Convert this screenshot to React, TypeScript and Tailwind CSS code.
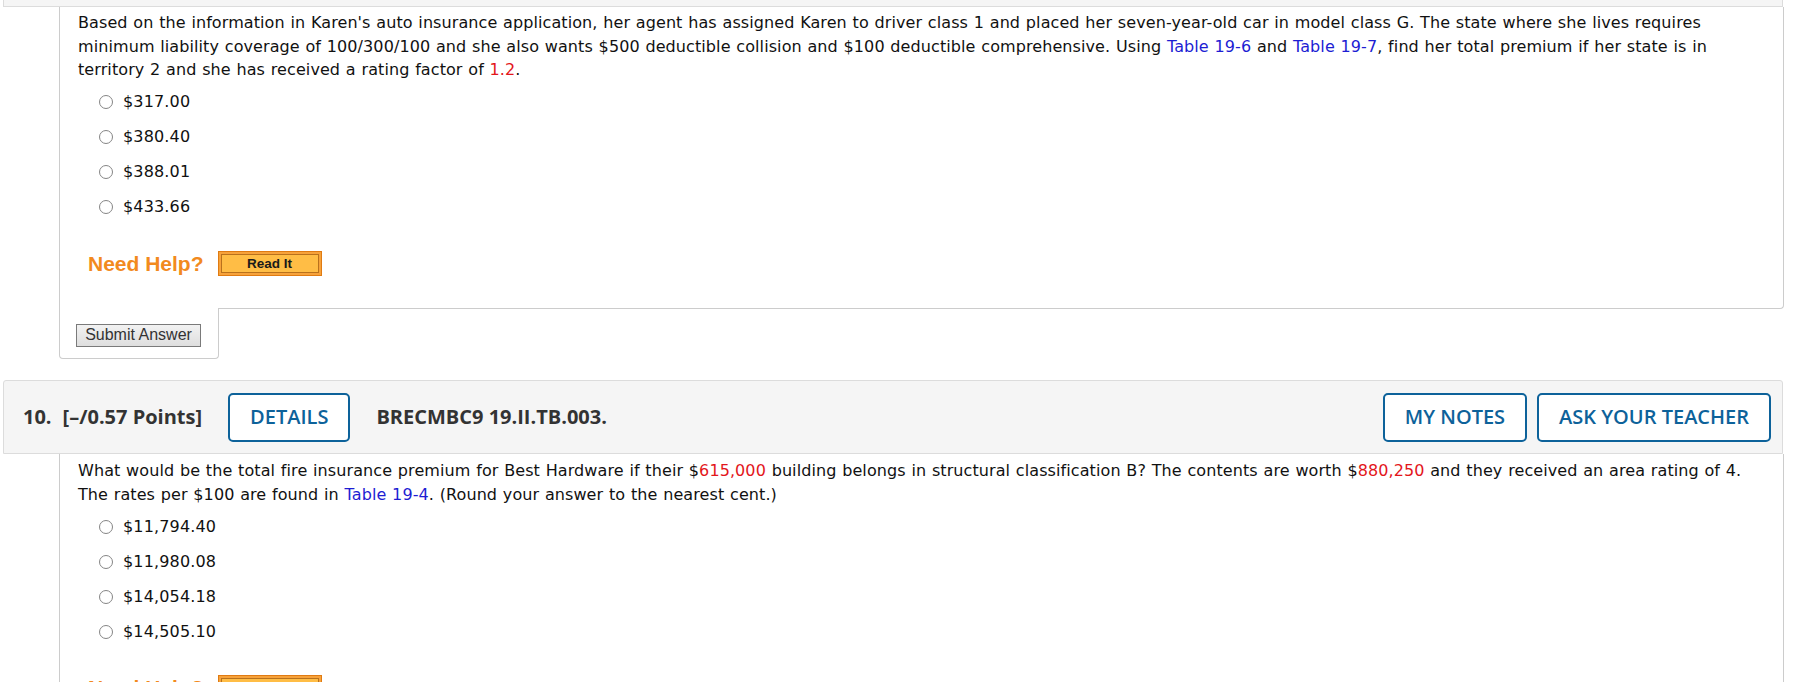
import React from "react";

const bodyFont = "font-['DejaVu_Sans','Verdana',sans-serif]";

function Radio() {
    return <span className="inline-block h-[14px] w-[14px] shrink-0 rounded-full border border-[#858585] bg-white" />;
}

function Options({ items }: { items: string[] }) {
    return (
        <ul className="ml-[21px] mt-[3px]">
            {items.map((label) => (
                <li key={label} className="flex h-[35px] items-center gap-[10px]">
                    <Radio />
                    <span className="text-[16px] tracking-[0.15px] text-[#111]">{label}</span>
                </li>
            ))}
        </ul>
    );
}

function NeedHelp() {
    return (
        <div className="ml-[10px] mt-[23px] flex items-center gap-[14px]">
            <span className="font-['Liberation_Sans',Arial,sans-serif] text-[21px] font-bold text-[#f28a1e]">Need Help?</span>
            <button className="flex h-[25px] w-[104px] items-center justify-center border border-[#e07b12] bg-[#f7a23a] p-[2px]">
                <span className="flex h-full w-full items-center justify-center border border-[#b9711c] bg-[#ffbd45] font-['Liberation_Sans',Arial,sans-serif] text-[13.5px] font-bold leading-none text-[#1a1a1a]">
                    Read It
                </span>
            </button>
        </div>
    );
}

function OutlineButton({ label }: { label: string }) {
    return (
        <button className="flex h-[49px] items-center rounded-[5px] border-2 border-[#0d629a] bg-white px-[20px] text-[20px] font-semibold text-[#0d629a]">
            {label}
        </button>
    );
}

function Link({ children }: { children: React.ReactNode }) {
    return <span className="text-[#1d1dd3]">{children}</span>;
}

function Red({ children }: { children: React.ReactNode }) {
    return <span className="text-[#e3161b]">{children}</span>;
}

export default function App() {
    return (
        <div className={`h-[682px] w-[1793px] overflow-hidden bg-white ${bodyFont}`}>
            {/* bottom edge of question 9 header */}
            <div className="ml-[3px] h-[7px] w-[1780px] border-x border-b border-[#dcdcdc] bg-[#f5f5f5]" />

            {/* question 9 body */}
            <div className="ml-[59px] w-[1725px] rounded-br-[4px] border-x border-b border-[#cccccc] pb-[29px] pl-[18px] pr-[30px] pt-[4px]">
                <p className="text-[16px] leading-[23.5px] tracking-[0.09px] text-[#111] [word-spacing:0.55px]">
                    Based on the information in Karen's auto insurance application, her agent has assigned Karen to driver class 1 and placed her
                    seven-year-old car in model class G. The state where she lives requires minimum liability coverage of 100/300/100 and she also
                    wants $500 deductible collision and $100 deductible comprehensive. Using <Link>Table 19-6</Link> and <Link>Table 19-7</Link>, find
                    her total premium if her state is in territory 2 and she has received a rating factor of <Red>1.2</Red>.
                </p>
                <Options items={["$317.00", "$380.40", "$388.01", "$433.66"]} />
                <NeedHelp />
            </div>
            <div className="relative -mt-px ml-[59px] w-[160px] rounded-b-[4px] border-x border-b border-[#cccccc] bg-white pb-[11px] pl-[16px] pt-[15px]">
                <button className="h-[23px] w-[125px] border border-[#7a7a7a] bg-gradient-to-b from-[#f2f2f2] to-[#dedede] font-['Liberation_Sans',Arial,sans-serif] text-[16px] leading-none text-[#333]">
                    Submit Answer
                </button>
            </div>

            {/* question 10 header */}
            <div className="ml-[3px] mt-[21px] flex h-[74px] w-[1780px] items-center rounded-t-[3px] border border-[#dcdcdc] bg-[#f5f5f5] pl-[19px] pr-[11px] font-['Open_Sans',sans-serif] text-[#333]">
                <span className="text-[20px] font-bold">10.</span>
                <span className="ml-[11px] text-[20px] font-bold">[–/0.57 Points]</span>
                <div className="ml-[26px]">
                    <OutlineButton label="DETAILS" />
                </div>
                <span className="ml-[26px] text-[20px] font-bold">BRECMBC9 19.II.TB.003.</span>
                <div className="ml-auto flex gap-[10px]">
                    <OutlineButton label="MY NOTES" />
                    <OutlineButton label="ASK YOUR TEACHER" />
                </div>
            </div>

            {/* question 10 body */}
            <div className="ml-[59px] w-[1725px] border-x border-[#cccccc] pl-[18px] pr-[30px] pt-[5px]">
                <p className="text-[16px] leading-[23.5px] tracking-[0.09px] text-[#111] [word-spacing:0.55px]">
                    What would be the total fire insurance premium for Best Hardware if their $<Red>615,000</Red> building belongs in structural
                    classification B? The contents are worth $<Red>880,250</Red> and they received an area rating of 4. The rates per $100 are found in{" "}
                    <Link>Table 19-4</Link>. (Round your answer to the nearest cent.)
                </p>
                <Options items={["$11,794.40", "$11,980.08", "$14,054.18", "$14,505.10"]} />
                <NeedHelp />
            </div>
        </div>
    );
}
